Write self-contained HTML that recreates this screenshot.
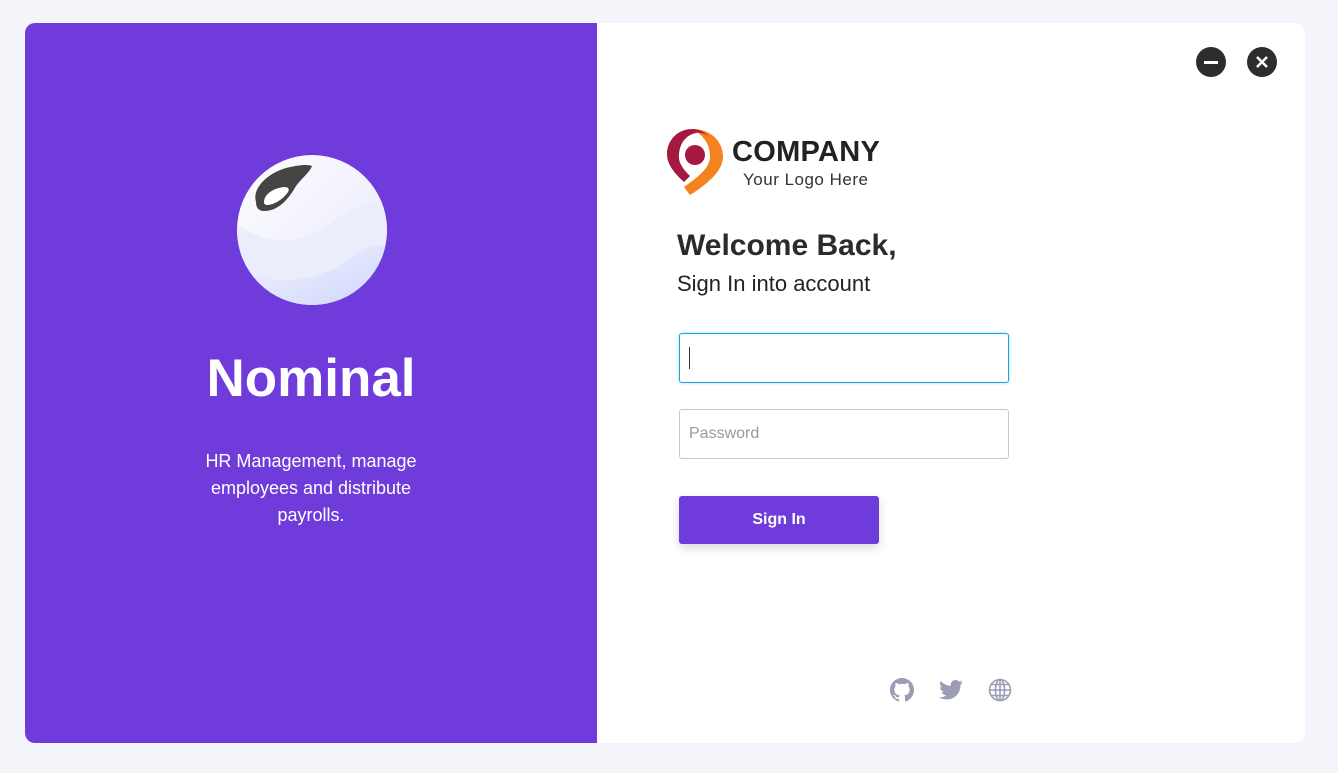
<!DOCTYPE html>
<html><head><meta charset="utf-8"><style>
*{margin:0;padding:0;box-sizing:border-box}
body{width:1338px;height:773px;background:#f4f5fa;font-family:"Liberation Sans",sans-serif;position:relative;overflow:hidden}
.card{position:absolute;left:25px;top:23px;width:1280px;height:720px;background:#fff;border-radius:10px;overflow:hidden}
.left{position:absolute;left:0;top:0;width:572px;height:720px;background:#6f3cdb}
.abs{position:absolute}
</style></head><body>
<div class="card">
 <div class="left">
  <svg class="abs" style="left:211px;top:131px" width="152" height="152" viewBox="0 0 152 152">
   <defs><linearGradient id="g" x1="0" y1="0" x2="1" y2="1"><stop offset="0" stop-color="#fdfdff"/><stop offset="1" stop-color="#e7e8fb"/></linearGradient>
   <linearGradient id="g2" x1="0" y1="0" x2="1" y2="1"><stop offset="0" stop-color="#f6f6ff"/><stop offset="1" stop-color="#c9d3fb"/></linearGradient>
   <clipPath id="c"><circle cx="76" cy="76" r="75"/></clipPath></defs>
   <circle cx="76" cy="76" r="75" fill="url(#g)"/>
   <g clip-path="url(#c)">
    <path d="M0 70 C40 95 70 90 100 65 C120 50 140 45 160 50 L160 160 L0 160Z" fill="#ecedfb"/>
    <path d="M0 115 C50 135 90 125 120 100 C135 90 150 90 160 92 L160 160 L0 160Z" fill="url(#g2)"/>
   </g>
   <path d="M20 48 C16 35 30 20 50 14 C62 11 72 10 76 12 C74 18 66 24 60 32 C52 46 42 57 28 57 C22 57 20 53 20 48Z" fill="#444"/>
   <path d="M28 48 C28 40 38 34 48 33 C52 33 54 35 52 38 C48 44 40 50 32 51 C29 51 28 50 28 48Z" fill="#fff"/>
  </svg>
  <div class="abs" style="left:0;width:572px;top:325px;text-align:center;color:#fff;font-weight:bold;font-size:53px">Nominal</div>
  <div class="abs" style="left:161px;width:250px;top:425px;text-align:center;color:#fff;font-size:18px;line-height:27px">HR Management, manage employees and distribute payrolls.</div>
 </div>
 <div class="abs" style="left:1171px;top:24px;width:30px;height:30px;border-radius:50%;background:#2d2d2d"><div class="abs" style="left:8px;top:14px;width:14px;height:2.5px;background:#fff"></div></div>
 <svg class="abs" style="left:1222px;top:24px" width="30" height="30"><circle cx="15" cy="15" r="15" fill="#2d2d2d"/><path d="M10 10L20 20M20 10L10 20" stroke="#fff" stroke-width="2.5"/></svg>
 <svg class="abs" style="left:641px;top:104px" width="58" height="70" viewBox="0 0 58 70">
  <path d="M27 2 C42 2 57 12 57 30 C57 42 45 55 24 68 L18 60 C35 48 44 40 44 29 C44 16 36 8 27 2Z" fill="#f58220"/>
  <path d="M26 2 C12 2 1 13 1 27 C1 37 8 46 18 55 L24 49 C16 41 12 35 13 27 C14 16 20 8 30 6 C36 5 42 8 44 12 C40 5 33 2 26 2Z" fill="#a4193d"/>
  <circle cx="29" cy="28" r="10" fill="#a4193d"/>
 </svg>
 <div class="abs" style="left:707px;top:113px;font-weight:bold;font-size:29px;color:#222;letter-spacing:0.3px">COMPANY</div>
 <div class="abs" style="left:718px;top:147px;font-size:17px;color:#333;letter-spacing:0.5px">Your Logo Here</div>
 <div class="abs" style="left:652px;top:206px;font-weight:bold;font-size:30px;color:#2b2b2b">Welcome Back,</div>
 <div class="abs" style="left:652px;top:248px;font-size:22px;color:#222">Sign In into account</div>
 <div class="abs" style="left:654px;top:310px;width:330px;height:50px;border:1.5px solid #1aa3d6;border-radius:3px;box-shadow:0 0 3px rgba(26,163,214,.4)"><div class="abs" style="left:9px;top:13px;width:1px;height:22px;background:#333"></div></div>
 <div class="abs" style="left:654px;top:386px;width:330px;height:50px;border:1px solid #c8c8c8;border-radius:3px;color:#999;font-size:16px;padding:15px 9px">Password</div>
 <div class="abs" style="left:654px;top:473px;width:200px;height:48px;background:#6f3cdb;border-radius:3px;color:#fff;font-weight:bold;font-size:16px;text-align:center;line-height:48px;box-shadow:0 4px 10px rgba(0,0,0,.15)">Sign In</div>
 <svg class="abs" style="left:865px;top:655px" width="24" height="24" viewBox="0 0 16 16"><path fill="#9a9db4" d="M8 0C3.58 0 0 3.580 0 8c0 3.54 2.29 6.53 5.47 7.59.4.07.55-.17.55-.38v-1.33c-2.230.48-2.7-1.07-2.7-1.07-.36-.92-.89-1.17-.89-1.17-.73-.5.05-.49.05-.49.8.06 1.23.83 1.23.83.72 1.22 1.87.87 2.33.66.07-.52.28-.87.5-1.07-1.78-.2-3.64-.89-3.64-3.95 0-.87.31-1.59.82-2.15-.08-.2-.36-1.02.08-2.12 0 0 .67-.21 2.2.82a7.6 7.6 0 014 0c1.53-1.04 2.2-.82 2.2-.82.44 1.1.16 1.92.08 2.12.51.56.82 1.27.82 2.15 0 3.07-1.87 3.75-3.65 3.950.29.25.54.73.54 1.48v2.2c0 .21.15.46.55.38A8 8 0 0016 8c0-4.42-3.58-8-8-8z"/></svg>
 <svg class="abs" style="left:914px;top:656px" width="24" height="22" viewBox="0 0 24 20"><path fill="#9a9db4" d="M24 2.4a9.8 9.8 0 01-2.8.8A4.9 4.9 0 0023.3.4a9.9 9.9 0 01-3.1 1.2A4.9 4.9 0 0011.8 6 14 14 0 011.7.9a4.9 4.9 0 001.5 6.6 4.9 4.9 0 01-2.2-.6 4.9 4.9 0 003.9 4.9 4.9 4.9 0 01-2.2.1 4.9 4.9 0 004.6 3.4A9.9 9.9 0 010 17.3 14 14 0 007.5 19.5c9.1 0 14-7.5 14-14v-.6A10 10 0 0024 2.4z"/></svg>
 <svg class="abs" style="left:963px;top:655px" width="24" height="24" viewBox="0 0 24 24" fill="none" stroke="#9a9db4" stroke-width="1.6"><circle cx="12" cy="12" r="10.5"/><ellipse cx="12" cy="12" rx="4.5" ry="10.5"/><path d="M12 1.5v21M1.5 12h21M3 6.5h18M3 17.5h18"/></svg>
</div>
</body></html>
